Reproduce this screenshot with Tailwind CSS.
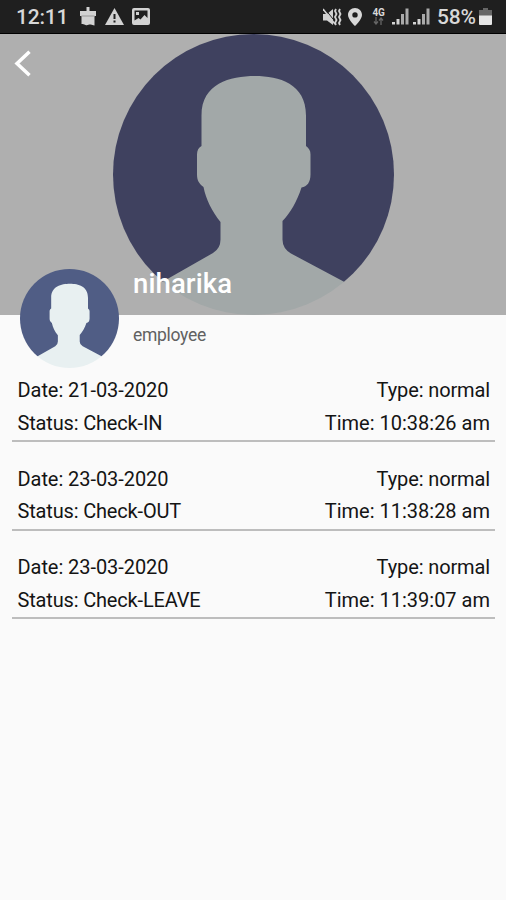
<!DOCTYPE html>
<html lang="en">
<head>
<meta charset="utf-8">
<meta name="viewport" content="width=device-width, initial-scale=1">
<title>Attendance</title>
<script src="https://cdn.jsdelivr.net/npm/@tailwindcss/browser@4"></script>
</head>
<body class="bg-[#fafafa] font-[Roboto,sans-serif] text-[#141414]">
<svg class="hidden">
  <symbol id="avatar" viewBox="113 34.5 281 281">
    <rect x="113" y="34" width="281" height="248.500" fill="var(--back)"/>
    <path fill="var(--person)" d="M255 76.500C279 76.500 306 84 306 116V146.500C309 149 310.500 151 310.500 155V175C310.500 183 307 187 301.500 188C297 202 290 214 282.500 221.500V240Q282.500 249 291 254L344.500 282.500L400 316H113L163 282L213 253.500Q220.500 249 220.500 240V222.500C212 212 206 200 203.500 187.500C199 184 197 181 197 175V155C197 151 198.500 148 201.500 146.500V116C201.500 84 230 76.500 255 76.500Z"/>
  </symbol>
  <symbol id="signal" viewBox="0 0 17 17">
    <path fill="#d2d2d2" d="M0 14h3v2.500H0zM4.500 11h3v5.500h-3z"/>
    <path fill="#aaaaaa" d="M9 6h3v10.500H9zM13.500 0.500h3v16h-3z"/>
  </symbol>
</svg>
<div class="flex h-[900px] w-[506px] flex-col overflow-hidden">
  <header class="flex h-[34px] shrink-0 items-center border-b border-black bg-[#1f1f1f] pl-[16px] pr-[14px] text-[#d8d8d8]">
    <span class="w-[63px] pt-px text-[21px] font-medium leading-none tracking-[-0.2px]">12:11</span>
    <svg class="h-[19px] w-[18px]" viewBox="0 0 18 19" fill="#d2d2d2"><path d="M7.500 0h3v4H17v5H1V4h6.500zM2.500 9h13v9.500c-2 0-2-1-4-1s-3 1.200-5 .5-2-1-4-1z"/><path fill="#999999" d="M2.500 8.500h13v1h-13z"/></svg>
    <svg class="ml-[8px] h-[17px] w-[19px]" viewBox="0 0 19 17"><path fill="#d2d2d2" d="M9.500 0L19 17H0z"/><path fill="#1f1f1f" d="M8.500 6h2v5h-2zM8.500 12.500h2v2h-2z"/></svg>
    <svg class="ml-[8px] h-[17px] w-[18px]" viewBox="0 0 18 17"><path fill="#d2d2d2" fill-rule="evenodd" d="M2 0h14q2 0 2 2v13q0 2-2 2H2q-2 0-2-2V2q0-2 2-2zM2.500 2.500v10l4-2.500 2 1.500 4-4.500 3 3V2.500z"/><path fill="#d2d2d2" d="M4 4h3v3H4z"/></svg>
    <div class="ml-auto flex items-center">
      <svg class="h-[18px] w-[19px]" viewBox="0 0 19 18"><path fill="#d2d2d2" d="M0 6h4l6-5v16l-6-4.500H0z"/><path stroke="#1f1f1f" stroke-width="1" d="M2 1l10 12.500"/><path stroke="#d2d2d2" stroke-width="1.500" d="M0 1l12 15"/><path fill="none" stroke="#d2d2d2" stroke-width="1.800" d="M13 1l-1 2 1.500 3-1.500 3 1.500 3-1.500 3 1 2M17 1l-1 2 1.500 3-1.500 3 1.500 3-1.500 3 1 2"/></svg>
      <svg class="ml-[6px] h-[18px] w-[14px]" viewBox="0 0 14 18"><path fill="#d8d8d8" fill-rule="evenodd" d="M7 0c4 0 7 3 7 7 0 4.500-7 11-7 11S0 11.500 0 7c0-4 3-7 7-7zm0 4.200a2.700 2.700 0 1 0 0 5.400 2.700 2.700 0 0 0 0-5.400z"/></svg>
      <div class="ml-[10px] flex w-[13px] flex-col items-center">
        <span class="text-[10px] font-bold leading-[9px] tracking-[-0.3px]">4G</span>
        <svg class="h-[8px] w-[11px]" viewBox="0 0 11 8" fill="none" stroke="#666666" stroke-width="1.300"><path d="M3 0v7M1 4.500L3 7l2-2.500M8 8V1M6 3.500L8 1l2 2.500"/></svg>
      </div>
      <svg class="ml-[7px] h-[17px] w-[17px]"><use href="#signal"/></svg>
      <svg class="ml-[4px] h-[17px] w-[17px]"><use href="#signal"/></svg>
      <span class="ml-[7px] w-[40px] whitespace-nowrap pt-px text-[21px] font-medium leading-none tracking-[-0.2px]">58%</span>
      <svg class="ml-[2px] h-[17px] w-[13px]" viewBox="0 0 13 17"><path fill="#666666" d="M4 0h5v2h4v6H0V2h4z"/><path fill="#e6e6e6" d="M0 7.500h13V16q0 1-1 1H1q-1 0-1-1z"/></svg>
    </div>
  </header>
  <section class="relative flex h-[281px] shrink-0 justify-center bg-[#afafaf]">
    <svg class="h-[281px] w-[281px] rounded-full [--back:#3f415f] [--person:#a2a8a8]"><use href="#avatar"/></svg>
    <svg class="absolute left-[14px] top-[16px] h-[27px] w-[18px]" viewBox="0 0 18 27" fill="none" stroke="#ffffff" stroke-width="3.500"><path d="M15.500 1.800L3 13.500l12.500 11.700"/></svg>
    <div class="absolute left-[20px] top-[235px] flex">
      <svg class="h-[99px] w-[99px] rounded-full [--back:#505d85] [--person:#e8f0f1]"><use href="#avatar"/></svg>
      <div class="ml-[14px]">
        <h1 class="text-[27.500px] font-medium leading-[30px] tracking-[0.1px] text-white">niharika</h1>
        <p class="mt-[24px] text-[17.500px] leading-[24px] tracking-[-0.300px] text-[#616161]">employee</p>
      </div>
    </div>
  </section>
  <main class="ml-[12px] mr-[11px] mt-[59px] flex flex-col gap-[20.700px] text-[20px] leading-[32.500px]">
    <article class="border-b-2 border-[#bdbdbd] pb-px pl-[5.500px] pr-[5px]">
      <div class="flex justify-between"><span class="tracking-[-0.06px]">Date: 21-03-2020</span><span class="tracking-[-0.12px]">Type: normal</span></div>
      <div class="flex justify-between"><span class="tracking-[-0.17px]">Status: Check-IN</span><span>Time: 10:38:26 am</span></div>
    </article>
    <article class="border-b-2 border-[#bdbdbd] pb-px pl-[5.500px] pr-[5px]">
      <div class="flex justify-between"><span class="tracking-[-0.06px]">Date: 23-03-2020</span><span class="tracking-[-0.12px]">Type: normal</span></div>
      <div class="flex justify-between"><span class="tracking-[-0.17px]">Status: Check-OUT</span><span>Time: 11:38:28 am</span></div>
    </article>
    <article class="border-b-2 border-[#bdbdbd] pb-px pl-[5.500px] pr-[5px]">
      <div class="flex justify-between"><span class="tracking-[-0.06px]">Date: 23-03-2020</span><span class="tracking-[-0.12px]">Type: normal</span></div>
      <div class="flex justify-between"><span class="tracking-[-0.17px]">Status: Check-LEAVE</span><span>Time: 11:39:07 am</span></div>
    </article>
  </main>
</div>
</body>
</html>
